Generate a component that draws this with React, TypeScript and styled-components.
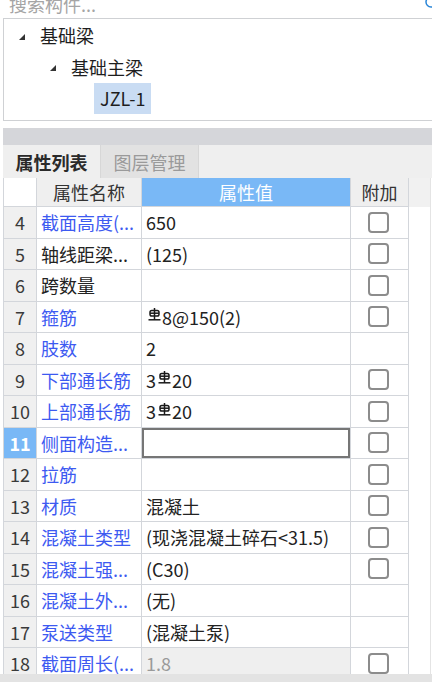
import * as React from 'react'
import styled, { createGlobalStyle } from 'styled-components'

const GlobalStyle = createGlobalStyle`
  html, body {
    margin: 0;
    padding: 0;
    background: #ffffff;
  }
  * {
    box-sizing: border-box;
  }
`

const Page = styled.div`
  width: 432px;
  height: 682px;
  overflow: hidden;
  display: flex;
  flex-direction: column;
  background: #ffffff;
  font-family: 'Noto Sans CJK SC', 'Noto Sans', sans-serif;
  font-size: 18px;
  color: #222;
`

const SearchBox = styled.div`
  position: relative;
  height: 19px;
  flex: none;
  margin-left: 3px;
  border-bottom: 1px solid #cfd1d4;
  overflow: hidden;
`

const SearchText = styled.div`
  margin-top: -6px;
  padding-left: 6px;
  line-height: 20px;
  color: #a5a5a5;
`

const SearchIcon = styled.svg`
  position: absolute;
  right: 0;
  top: 0;
`

const Tree = styled.div`
  height: 102px;
  flex: none;
  margin-left: 3px;
  border-left: 1px solid #cfd1d4;
  border-bottom: 1px solid #cfd1d4;
  padding-top: 1px;
`

const TreeRow = styled.div<{ $level: number }>`
  height: 31.5px;
  display: flex;
  align-items: center;
  padding-left: ${(p) => 15 + p.$level * 31}px;
`

const Caret = styled.span`
  width: 0;
  height: 0;
  border-left: 6px solid transparent;
  border-bottom: 6px solid #333;
  margin-right: 15px;
  margin-top: 2px;
`

const TreeLabel = styled.span<{ $selected?: boolean }>`
  line-height: 31px;
  padding: 0 ${(p) => (p.$selected ? '6px' : '0')};
  margin-left: ${(p) => (p.$selected ? '13px' : '0')};
  background: ${(p) => (p.$selected ? '#c9dcf3' : 'transparent')};
  color: #1e1e1e;
`

const Spacer = styled.div`
  height: 7px;
  flex: none;
`

const GrayBar = styled.div`
  height: 17px;
  flex: none;
  margin-left: 3px;
  background: #d5d6da;
`

const TabBar = styled.div`
  height: 33px;
  flex: none;
  margin-left: 3px;
  display: flex;
  background: #efefef;
`

const Tab = styled.div<{ $active?: boolean }>`
  width: 98px;
  display: flex;
  align-items: center;
  justify-content: center;
  font-weight: ${(p) => (p.$active ? 700 : 400)};
  color: ${(p) => (p.$active ? '#2a2a2a' : '#9a9a9a')};
  background: ${(p) => (p.$active ? '#efefef' : '#e2e2e2')};
  border-right: 1px solid #d7d7d7;
`

const Body = styled.div`
  flex: 1;
  min-height: 0;
  display: flex;
  overflow: hidden;
`

const Table = styled.div`
  margin-left: 3px;
  border-left: 1px solid #d3d6db;
  display: grid;
  grid-template-columns: 33px 105px 209px 58px;
  grid-auto-rows: 31.5px;
  grid-template-rows: 29px;
  align-content: start;
`

const Cell = styled.div`
  border-right: 1px solid #d3d6db;
  border-bottom: 1px solid #d3d6db;
  display: flex;
  align-items: center;
  white-space: nowrap;
  overflow: hidden;
  line-height: 20px;
`

const HeadCell = styled(Cell)<{ $tone: 'blank' | 'plain' | 'accent' }>`
  justify-content: center;
  background: ${(p) =>
    p.$tone === 'accent' ? '#79b8f6' : p.$tone === 'plain' ? '#efefef' : '#ffffff'};
  color: ${(p) => (p.$tone === 'accent' ? '#ffffff' : '#333')};
`

const NumCell = styled(Cell)<{ $selected?: boolean }>`
  justify-content: center;
  background: ${(p) => (p.$selected ? '#79b8f6' : '#f0f0f0')};
  color: ${(p) => (p.$selected ? '#ffffff' : '#3a3a3a')};
  font-weight: ${(p) => (p.$selected ? 700 : 400)};
`

const NameCell = styled(Cell)<{ $blue: boolean }>`
  padding-left: 4px;
  color: ${(p) => (p.$blue ? '#3d5af1' : '#222')};
`

const ValueCell = styled(Cell)<{ $editing?: boolean; $readonly?: boolean }>`
  padding-left: 4px;
  background: ${(p) => (p.$readonly ? '#efefef' : '#ffffff')};
  color: ${(p) => (p.$readonly ? '#9a9a9a' : '#222')};
  box-shadow: ${(p) => (p.$editing ? 'inset 0 0 0 2px #767676' : 'none')};
`

const AddCell = styled(Cell)`
  justify-content: center;
  padding-right: 3px;
`

const Check = styled.span`
  width: 21px;
  height: 21px;
  border: 2px solid #8c8c8c;
  border-radius: 4px;
  background: #fff;
`

const SideStrip = styled.div`
  flex: 1;
  display: flex;
  flex-direction: column;
  border-right: 1px solid #e4e4e4;
  margin-right: 1px;
`

const SideHead = styled.div`
  height: 29px;
  background: #f1f1f1;
`

const BottomBar = styled.div`
  height: 8px;
  flex: none;
  background: #e3e3e3;
`

const Rebar = styled.svg`
  margin: 0 1px 0 2px;
  position: relative;
  top: -2px;
  flex: none;
`

const RebarMark = () => (
  <Rebar width="13" height="13" viewBox="0 0 13 13">
    <g fill="none" stroke="#1a1a1a" strokeWidth="1.5">
      <rect x="2" y="2.5" width="9" height="5.5" rx="1.8" />
      <line x1="6.5" y1="0" x2="6.5" y2="12" />
      <line x1="2" y1="5.2" x2="11" y2="5.2" />
      <line x1="0.5" y1="11.8" x2="12.5" y2="11.8" />
    </g>
  </Rebar>
)

type Row = {
  n: number
  name: string
  blue: boolean
  value: React.ReactNode
  check: boolean
  editing?: boolean
  readonly?: boolean
}

const rows: Row[] = [
  { n: 4, name: '截面高度(...', blue: true, value: '650', check: true },
  { n: 5, name: '轴线距梁...', blue: false, value: '(125)', check: true },
  { n: 6, name: '跨数量', blue: false, value: '', check: true },
  {
    n: 7,
    name: '箍筋',
    blue: true,
    value: (
      <>
        <RebarMark />
        8@150(2)
      </>
    ),
    check: true,
  },
  { n: 8, name: '肢数', blue: true, value: '2', check: false },
  {
    n: 9,
    name: '下部通长筋',
    blue: true,
    value: (
      <>
        3<RebarMark />
        20
      </>
    ),
    check: true,
  },
  {
    n: 10,
    name: '上部通长筋',
    blue: true,
    value: (
      <>
        3<RebarMark />
        20
      </>
    ),
    check: true,
  },
  { n: 11, name: '侧面构造...', blue: true, value: '', check: true, editing: true },
  { n: 12, name: '拉筋', blue: true, value: '', check: true },
  { n: 13, name: '材质', blue: true, value: '混凝土', check: true },
  { n: 14, name: '混凝土类型', blue: true, value: '(现浇混凝土碎石<31.5)', check: true },
  { n: 15, name: '混凝土强...', blue: true, value: '(C30)', check: true },
  { n: 16, name: '混凝土外...', blue: true, value: '(无)', check: false },
  { n: 17, name: '泵送类型', blue: true, value: '(混凝土泵)', check: false },
  { n: 18, name: '截面周长(...', blue: true, value: '1.8', check: true, readonly: true },
]

const App = () => {
  return (
    <Page>
      <GlobalStyle />
      <SearchBox>
        <SearchText>搜索构件...</SearchText>
        <SearchIcon width="10" height="10" viewBox="0 0 10 10">
          <circle cx="9" cy="2" r="5" fill="none" stroke="#2a86d8" strokeWidth="1.5" />
        </SearchIcon>
      </SearchBox>
      <Tree>
        <TreeRow $level={0}>
          <Caret />
          <TreeLabel>基础梁</TreeLabel>
        </TreeRow>
        <TreeRow $level={1}>
          <Caret />
          <TreeLabel>基础主梁</TreeLabel>
        </TreeRow>
        <TreeRow $level={2}>
          <TreeLabel $selected>JZL-1</TreeLabel>
        </TreeRow>
      </Tree>
      <Spacer />
      <GrayBar />
      <TabBar>
        <Tab $active>属性列表</Tab>
        <Tab>图层管理</Tab>
      </TabBar>
      <Body>
        <Table>
          <HeadCell $tone="blank" />
          <HeadCell $tone="plain">属性名称</HeadCell>
          <HeadCell $tone="accent">属性值</HeadCell>
          <HeadCell $tone="plain">附加</HeadCell>
          {rows.map((r) => (
            <React.Fragment key={r.n}>
              <NumCell $selected={r.editing}>{r.n}</NumCell>
              <NameCell $blue={r.blue}>{r.name}</NameCell>
              <ValueCell $editing={r.editing} $readonly={r.readonly}>
                {r.value}
              </ValueCell>
              <AddCell>{r.check && <Check />}</AddCell>
            </React.Fragment>
          ))}
        </Table>
        <SideStrip>
          <SideHead />
        </SideStrip>
      </Body>
      <BottomBar />
    </Page>
  )
}

export default App
